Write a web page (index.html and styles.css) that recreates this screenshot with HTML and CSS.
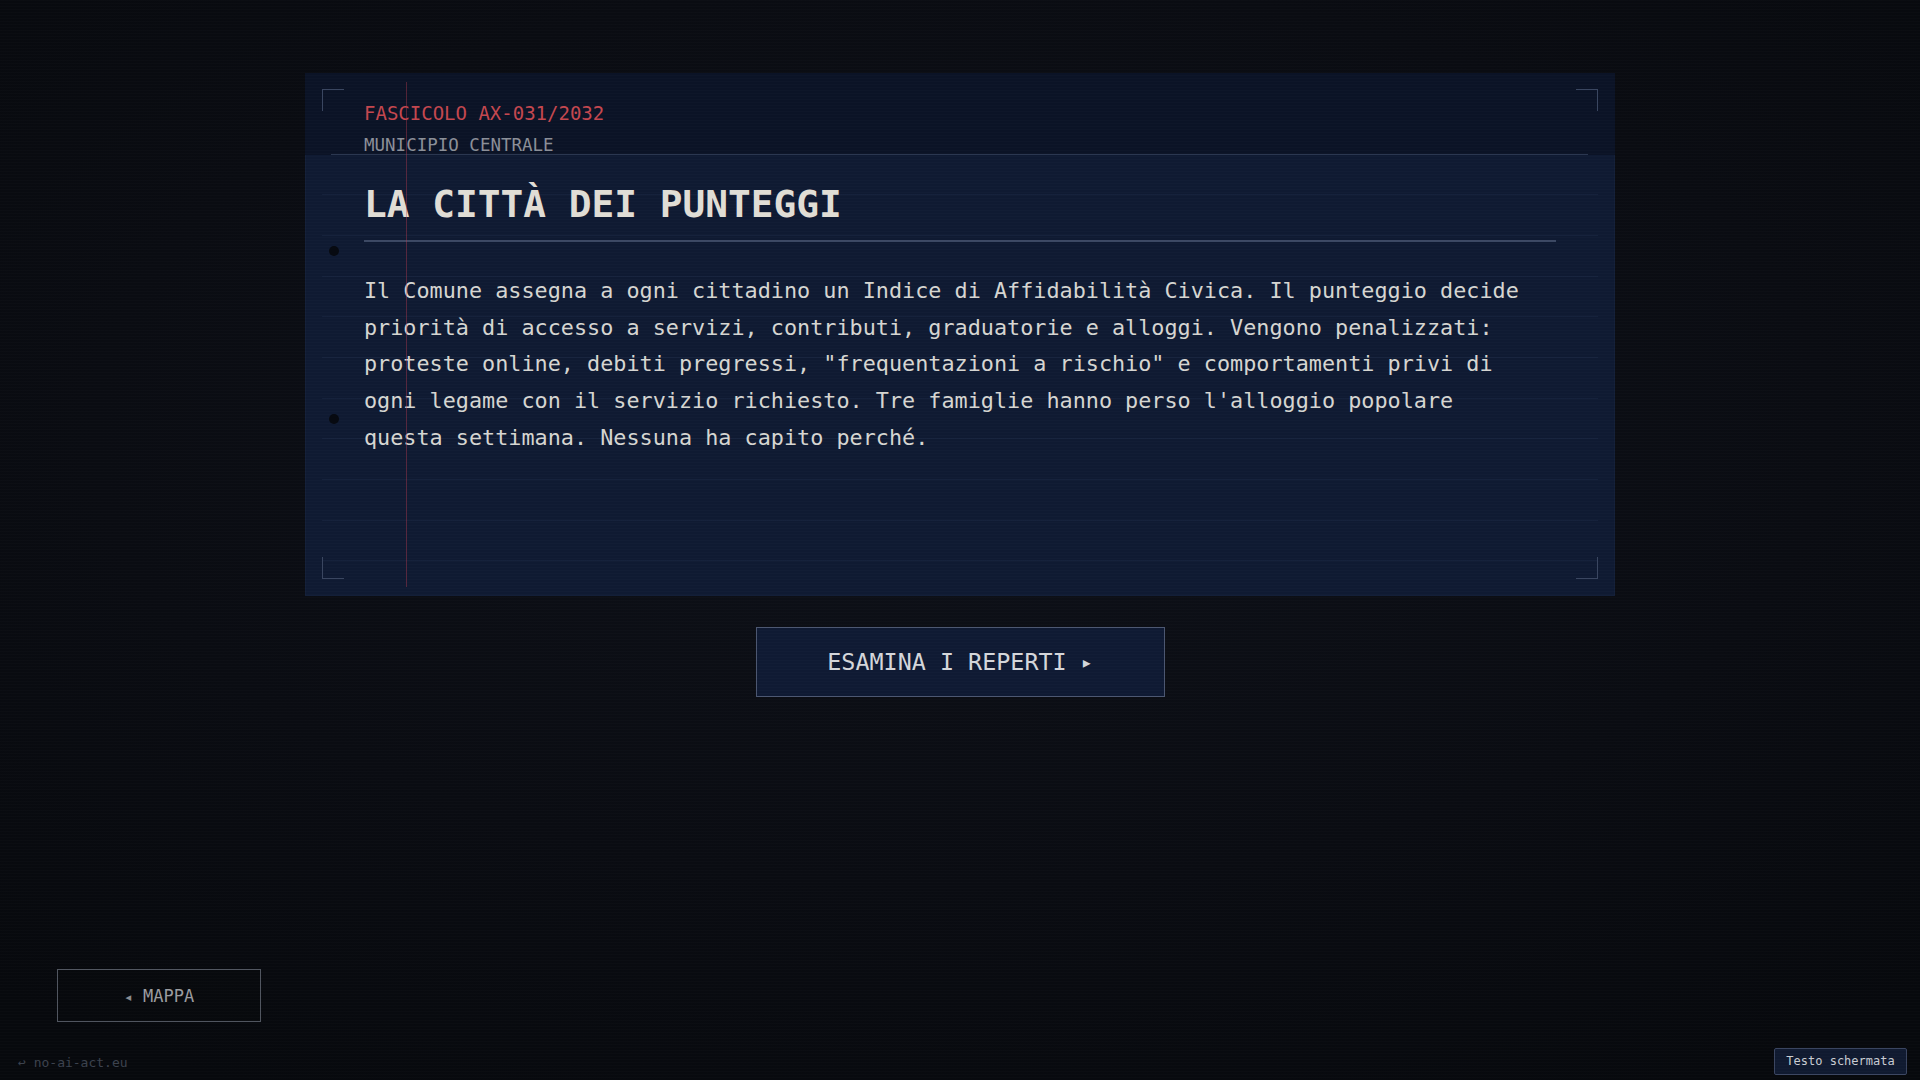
FILE: index.html
```html
<!DOCTYPE html>
<html lang="it">
<head>
<meta charset="utf-8">
<title>La città dei punteggi</title>
<link rel="stylesheet" href="styles.css">
</head>
<body>
<div class="screen">
  <main class="stage">
    <article class="card">
      <span class="corner corner-tl"></span>
      <span class="corner corner-tr"></span>
      <span class="corner corner-bl"></span>
      <span class="corner corner-br"></span>
      <span class="margin-line"></span>
      <span class="hole hole-1"></span>
      <span class="hole hole-2"></span>
      <header class="card-head">
        <div class="head-inner">
          <div class="file-no">FASCICOLO AX-031/2032</div>
          <div class="office">MUNICIPIO CENTRALE</div>
        </div>
      </header>
      <div class="card-body">
        <h1 class="title">LA CITTÀ DEI PUNTEGGI</h1>
        <p class="text">Il Comune assegna a ogni cittadino un Indice di Affidabilità Civica. Il punteggio decide priorità di accesso a servizi, contributi, graduatorie e alloggi. Vengono penalizzati: proteste online, debiti pregressi, "frequentazioni a rischio" e comportamenti privi di ogni legame con il servizio richiesto. Tre famiglie hanno perso l'alloggio popolare questa settimana. Nessuna ha capito perché.</p>
      </div>
    </article>
    <button class="primary-btn" type="button">ESAMINA I REPERTI <span class="tri">▸</span></button>
  </main>
  <footer class="bottom">
    <div class="bottom-left">
      <button class="back-btn" type="button"><span class="tri-l">◂</span> MAPPA</button>
      <div class="credit">↩ no-ai-act.eu</div>
    </div>
  </footer>
  <div class="badge">Testo schermata</div>
</div>
</body>
</html>
```

FILE: styles.css
```css
html, body {
  margin: 0;
  padding: 0;
}

body {
  width: 1920px;
  height: 1080px;
  overflow: hidden;
  background: radial-gradient(ellipse 75% 70% at 50% 40%, #0e1119 0%, #0a0c12 60%, #07090d 100%);
  font-family: "DejaVu Sans Mono", "Liberation Mono", monospace;
  color: #d3d3cf;
}

body::after {
  content: "";
  position: fixed;
  inset: 0;
  pointer-events: none;
  background: repeating-linear-gradient(to bottom, rgba(255,255,255,0.015) 0px, rgba(255,255,255,0.015) 1px, rgba(0,0,0,0) 1px, rgba(0,0,0,0) 3px);
}

.screen {
  height: 1080px;
  display: flex;
  flex-direction: column;
}

.stage {
  flex: 1;
  display: flex;
  flex-direction: column;
  align-items: center;
  padding-top: 73px;
}

.card {
  position: relative;
  width: 1310px;
  height: 523px;
  box-sizing: border-box;
  background-color: #0f1a32;
  background-image: repeating-linear-gradient(to bottom, rgba(0,0,0,0) 0px, rgba(0,0,0,0) 39.7px, rgba(70,90,130,0.12) 39.7px, rgba(70,90,130,0.12) 40.7px);
  background-size: calc(100% - 34px) 100%;
  background-position: 17px 0;
  background-repeat: no-repeat;
  box-shadow: inset 0 0 0 1px rgba(60,80,120,0.1);
}

.corner {
  position: absolute;
  width: 21px;
  height: 21px;
  border-color: #3a4660;
  border-style: solid;
  border-width: 0;
  z-index: 2;
}
.corner-tl { top: 16px; left: 17px; border-top-width: 1.5px; border-left-width: 1.5px; }
.corner-tr { top: 16px; right: 17px; border-top-width: 1.5px; border-right-width: 1.5px; }
.corner-bl { bottom: 17px; left: 17px; border-bottom-width: 1.5px; border-left-width: 1.5px; }
.corner-br { bottom: 17px; right: 17px; border-bottom-width: 1.5px; border-right-width: 1.5px; }

.margin-line {
  position: absolute;
  left: 101px;
  top: 9px;
  bottom: 9px;
  width: 1px;
  background: rgba(190, 60, 80, 0.4);
  z-index: 2;
}

.hole {
  position: absolute;
  left: 24px;
  width: 10px;
  height: 10px;
  border-radius: 50%;
  background: #070a11;
  z-index: 2;
}
.hole-1 { top: 173px; }
.hole-2 { top: 341px; }

.card-head {
  background: #0b1326;
  padding: 27px 27px 0 26px;
}

.head-inner {
  padding-left: 33px;
  border-bottom: 1.5px solid #2b3750;
}

.file-no {
  font-size: 19px;
  line-height: 26px;
  color: #c4474f;
}

.office {
  margin-top: 11px;
  font-size: 17.5px;
  line-height: 17px;
  color: #8b8f98;
}

.card-body {
  padding: 0 59px;
}

.title {
  margin: 26px 0 0;
  padding-bottom: 13px;
  border-bottom: 2px solid #3b4863;
  font-size: 37.8px;
  line-height: 46px;
  font-weight: bold;
  color: #e0ddd5;
}

.text {
  margin: 31px 0 0;
  max-width: 1160px;
  font-size: 21.8px;
  line-height: 36.7px;
  color: #d5d5d1;
}

.primary-btn {
  margin-top: 31px;
  width: 409px;
  height: 70px;
  box-sizing: border-box;
  background: #0f1a33;
  border: 1.5px solid #4b5670;
  color: #d4d6da;
  font-family: "DejaVu Sans Mono", "Liberation Mono", monospace;
  font-size: 23.4px;
  padding: 0;
  cursor: pointer;
}

.primary-btn .tri {
  font-size: 20px;
  vertical-align: 1px;
}

.bottom {
  display: flex;
  padding: 0 0 9px 18px;
}

.bottom-left {
  display: flex;
  flex-direction: column;
  align-items: flex-start;
}

.back-btn {
  margin-left: 39px;
  width: 204px;
  height: 53px;
  box-sizing: border-box;
  background: rgba(8, 10, 14, 0.6);
  border: 1.5px solid #50555f;
  color: #9b9ca0;
  font-family: "DejaVu Sans Mono", "Liberation Mono", monospace;
  font-size: 17px;
  padding: 0;
}

.back-btn .tri-l {
  font-size: 15px;
  color: #8a8c90;
}

.credit {
  margin-top: 33px;
  font-size: 13px;
  line-height: 16px;
  color: #3c424e;
}

.badge {
  position: fixed;
  right: 13px;
  bottom: 5px;
  width: 133px;
  height: 27px;
  box-sizing: border-box;
  background: #101a30;
  border: 1px solid #3a4560;
  border-radius: 2px;
  color: #c9ccd3;
  font-size: 12px;
  line-height: 25px;
  text-align: center;
}
```
